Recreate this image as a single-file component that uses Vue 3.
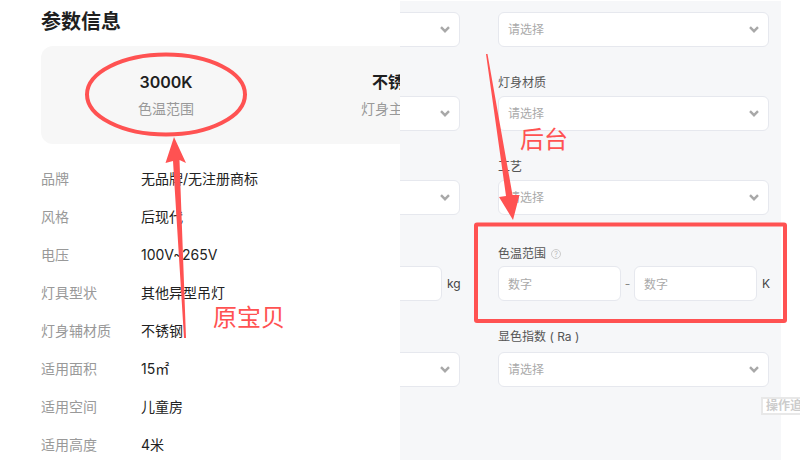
<script setup>
const params = [
  ['品牌', '无品牌/无注册商标'],
  ['风格', '后现代'],
  ['电压', '100V~265V'],
  ['灯具型状', '其他异型吊灯'],
  ['灯身辅材质', '不锈钢'],
  ['适用面积', '15㎡'],
  ['适用空间', '儿童房'],
  ['适用高度', '4米']
]
const highlights = [
  ['3000K', '色温范围'],
  ['不锈钢', '灯身主材质']
]
const plainRows = [
  { label: '', cls: 'first' },
  { label: '灯身材质', cls: '' },
  { label: '工艺', cls: '' }
]
</script>

<template>
  <div class="page">
    <section class="left">
      <h2 class="title">参数信息</h2>
      <div class="card">
        <div v-for="h in highlights" :key="h[0]" class="hl">
          <div class="hl-value">{{ h[0] }}</div>
          <div class="hl-label">{{ h[1] }}</div>
        </div>
      </div>
      <div v-for="p in params" :key="p[0]" class="param">
        <span class="param-label">{{ p[0] }}</span>
        <span class="param-value">{{ p[1] }}</span>
      </div>
    </section>

    <section class="right">
      <div v-for="r in plainRows" :key="r.label" class="row" :class="r.cls">
        <div class="select"><svg class="chev" viewBox="0 0 10 7"><path d="M1 1.2 5 5.2 9 1.2" /></svg></div>
        <div>
          <div v-if="r.label" class="label">{{ r.label }}</div>
          <div class="select"><span class="ph">请选择</span><svg class="chev" viewBox="0 0 10 7"><path d="M1 1.2 5 5.2 9 1.2" /></svg></div>
        </div>
      </div>

      <div class="row range">
        <div class="with-unit">
          <div class="input grow"></div>
          <span class="unit">kg</span>
        </div>
        <div>
          <div class="label tight">色温范围 <span class="help">?</span></div>
          <div class="with-unit">
            <div class="input num"><span class="ph-num">数字</span></div>
            <span class="dash">-</span>
            <div class="input num"><span class="ph-num">数字</span></div>
            <span class="unit k">K</span>
          </div>
        </div>
      </div>

      <div class="row last">
        <div class="select"><svg class="chev" viewBox="0 0 10 7"><path d="M1 1.2 5 5.2 9 1.2" /></svg></div>
        <div>
          <div class="label">显色指数 ( Ra )</div>
          <div class="select"><span class="ph">请选择</span><svg class="chev" viewBox="0 0 10 7"><path d="M1 1.2 5 5.2 9 1.2" /></svg></div>
        </div>
      </div>
    </section>

    <div class="trace">操作追溯</div>

    <svg class="marks" viewBox="0 0 800 460" width="800" height="460">
      <ellipse cx="166" cy="94.5" rx="79" ry="40" fill="none" stroke="#ff5252" stroke-width="4" />
      <polygon fill="#ff5252" points="174,137 186,163 179.5,160 186,338 184,338 173,161 165.5,163" />
      <polygon fill="#ff5252" points="486,54 487.5,54 512.5,195 519.5,195 513,220 499,197 506,196" />
      <rect x="476" y="224.5" width="309" height="96.5" rx="1" fill="none" stroke="#ff5252" stroke-width="4" />
    </svg>
    <span class="note note-a">原宝贝</span>
    <span class="note note-b">后台</span>
  </div>
</template>

<style>
html, body { margin: 0; overflow: hidden; background: #fff; }
</style>

<style scoped>
.page {
  position: relative;
  display: flex;
  width: 800px;
  height: 460px;
  overflow: hidden;
  background: #fff;
  font-family: Inter, "Noto Sans CJK SC", sans-serif;
}
.left {
  position: relative;
  z-index: 1;
  flex: 0 0 400px;
  box-sizing: border-box;
  padding: 8px 0 0 41px;
  overflow: hidden;
  background: #fff;
}
.title {
  margin: 0 0 10px;
  font-size: 20px;
  line-height: 28px;
  font-weight: 700;
  color: #1f1f1f;
}
.card {
  display: flex;
  width: 500px;
  height: 98px;
  box-sizing: border-box;
  padding: 24px 0 0 10px;
  margin-bottom: 15px;
  border-radius: 12px;
  background: #f7f7f7;
}
.hl { flex: 0 0 230px; text-align: center; }
.hl-value { font-size: 16px; line-height: 24px; font-weight: 600; color: #1f1f1f; }
.hl-label { margin-top: 5px; font-size: 14px; line-height: 20px; color: #999; }
.param { display: flex; height: 38px; align-items: center; font-size: 14px; }
.param-label { flex: 0 0 100px; color: #999; }
.param-value { color: #222; }

.right {
  flex: 0 0 381px;
  height: 459px;
  box-sizing: border-box;
  margin-top: 1px;
  padding-top: 11px;
  background: #f6f7f9;
  overflow: hidden;
}
.row {
  display: grid;
  grid-template-columns: 80px 271px;
  column-gap: 38px;
  align-items: end;
  margin: 26px 0 0 -20px;
}
.row.first { margin-top: 0; }
.row.range { margin-top: 29px; }
.row.last { margin-top: 26px; }
.label {
  height: 20px;
  margin-bottom: 3px;
  font-size: 12px;
  line-height: 20px;
  color: #555;
}
.label.tight { margin-bottom: 2px; display: flex; align-items: center; gap: 5px; }
.last .label { margin-bottom: 5px; }
.select, .input {
  display: flex;
  align-items: center;
  height: 35px;
  box-sizing: border-box;
  padding: 0 9px;
  background: #fff;
  border: 1px solid #e6e8ee;
  border-radius: 6px;
}
.ph { padding-bottom: 2px; font-size: 12px; color: #aaa; }
.ph-num { font-size: 12px; color: #aaa; }
.chev { width: 10px; height: 7px; margin-left: auto; }
.chev path { fill: none; stroke: #a8a8a8; stroke-width: 2.4; }
.with-unit { display: flex; align-items: center; }
.grow { flex: 0 0 62px; }
.num { flex: 0 0 123px; }
.unit { margin-left: 5px; font-size: 12px; color: #444; }
.k { margin-left: 5px; }
.dash { flex: 0 0 13px; text-align: center; font-size: 12px; color: #888; }
.help {
  display: inline-flex;
  align-items: center;
  justify-content: center;
  width: 10px;
  height: 10px;
  box-sizing: border-box;
  border: 1px solid #ccc;
  border-radius: 50%;
  font-size: 7px;
  line-height: 1;
  color: #bbb;
}
.trace {
  position: absolute;
  z-index: 2;
  left: 761px;
  top: 397px;
  width: 70px;
  height: 18px;
  box-sizing: border-box;
  padding-left: 3px;
  border: 2px solid #e8e8e8;
  background: #fff;
  font-size: 12px;
  line-height: 14px;
  font-weight: 700;
  color: #ccc;
  white-space: nowrap;
}
.marks { position: absolute; z-index: 3; left: 0; top: 0; pointer-events: none; }
.note {
  position: absolute;
  z-index: 4;
  font-size: 24px;
  line-height: 30px;
  color: #ff5252;
  white-space: nowrap;
}
.note-a { left: 213px; top: 303px; }
.note-b { left: 520px; top: 125px; }
</style>
